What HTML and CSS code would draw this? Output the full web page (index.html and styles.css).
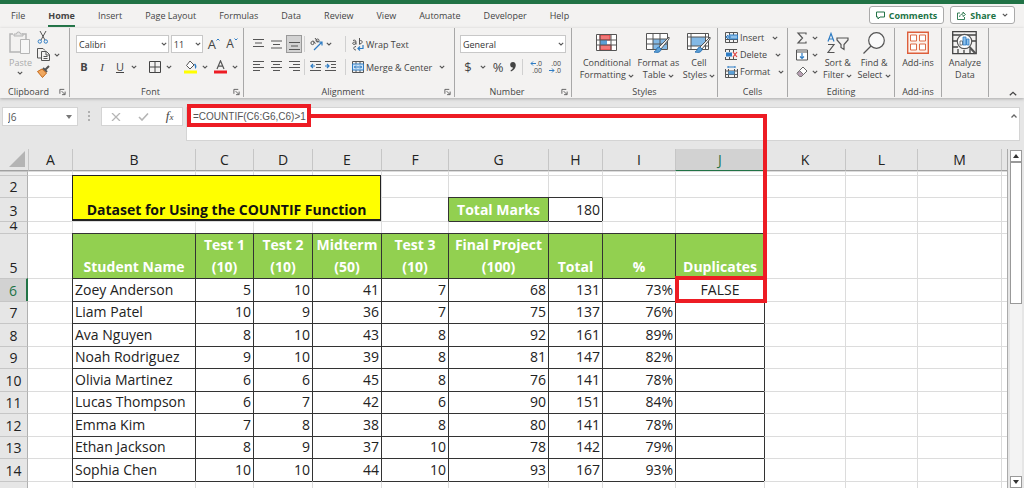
FILE: index.html
```html
<!DOCTYPE html>
<html lang="en">
<head>
<meta charset="utf-8">
<title>Spreadsheet</title>
<link rel="stylesheet" href="styles.css">
</head>
<body>
<svg class="defs" aria-hidden="true">
  <symbol id="chev" viewBox="0 0 6 4"><path d="M.8.8 3 3 5.200.8" fill="none" stroke="#555" stroke-width="1.1"/></symbol>
  <symbol id="launch" viewBox="0 0 8 8"><path d="M1 6V1h5M3 3l3.500 3.500M7 3.500V7H3.500" fill="none" stroke="#555"/></symbol>
  <symbol id="pen" viewBox="0 0 18 18"><path d="M17 1 7 11l2 2 8-10z" fill="#f3f2f1" stroke="#555"/><path d="M7 11c-3 0-2 4-5 5 4 1 7 0 7-3z" fill="#5b9fd6" stroke="#2f75b5"/></symbol>
</svg>
<div class="app">
  <div class="titlebar"></div>
  <header class="tabs">
    <nav class="tablist">
      <button>File</button><button class="current">Home</button><button>Insert</button><button>Page Layout</button><button>Formulas</button><button>Data</button><button>Review</button><button>View</button><button>Automate</button><button>Developer</button><button>Help</button>
    </nav>
    <div class="actions">
      <button class="pill"><svg width="9" height="9" viewBox="0 0 9 9"><path d="M.5 1h8v5H4L2 8V6H.500z" fill="none" stroke="#217346"/></svg>Comments</button>
      <button class="pill"><svg width="9" height="9" viewBox="0 0 9 9"><path d="M3 2H.5v6.500h7V6M2.500 6C3 3.500 4.500 3 6 3V1l2.500 2.500L6 5.500V4" fill="none" stroke="#217346" stroke-width=".9"/></svg>Share<svg class="chev share-chev"><use href="#chev"/></svg></button>
    </div>
  </header>

  <section class="ribbon">
    <div class="group clipboard">
      <div class="body">
        <button class="big paste"><svg width="22" height="24" viewBox="0 0 22 24"><path d="M4 3H1v18h10M13 3h4v5" fill="none" stroke="#b5b5b5" stroke-width="1.500"/><path d="M5 5V3h2.500a2 2 0 0 1 4 0H14v2z" fill="#e5e5e5" stroke="#b5b5b5"/><path d="M11.500 8.500h9v14h-9z" fill="#f7f7f7" stroke="#b5b5b5"/></svg><span>Paste</span><svg class="chev"><use href="#chev"/></svg></button>
        <div class="stack">
          <button aria-label="Cut"><svg width="12" height="13" viewBox="0 0 12 13"><path d="M3 0 8 9M9 0 4 9" stroke="#555"/><circle cx="2.800" cy="10.500" r="1.700" fill="none" stroke="#2e7cc4"/><circle cx="8.800" cy="10.500" r="1.700" fill="none" stroke="#2e7cc4"/></svg></button>
          <button aria-label="Copy" class="row"><svg width="13" height="13" viewBox="0 0 13 13"><path d="M4 10H.5V.5H6L8 2.500M4.500 3.500h5l3 3v6h-8zM9 3.500V7h3.500M6.500 8.500h4M6.500 10.500h4" fill="none" stroke="#555"/></svg><svg class="chev"><use href="#chev"/></svg></button>
          <button aria-label="Format painter"><svg width="13" height="13" viewBox="0 0 13 13"><path d="M12 1 8.500 4.500M6 3l4 4" stroke="#555" stroke-width="2"/><path d="M5 4 .500 6.500 5.500 12.500 9.500 8z" fill="#f0a860" stroke="#c56a1a"/></svg></button>
        </div>
      </div>
      <div class="label">Clipboard<svg class="launch"><use href="#launch"/></svg></div>
    </div>

    <div class="group font">
      <div class="body rows">
        <div class="tools">
          <label class="drop name"><select aria-label="Font"><option>Calibri</option></select><svg class="chev"><use href="#chev"/></svg></label>
          <label class="drop size"><select aria-label="Font size"><option>11</option></select><svg class="chev"><use href="#chev"/></svg></label>
          <button class="glyph grow" aria-label="Increase font size">A<svg width="4" height="3" viewBox="0 0 4 3"><path d="M.5 2.500 2 1l1.500 1.500" fill="none" stroke="#2e7cc4"/></svg></button>
          <button class="glyph shrink" aria-label="Decrease font size">A<svg width="4" height="3" viewBox="0 0 4 3"><path d="M.5.5 2 2 3.500.5" fill="none" stroke="#2e7cc4"/></svg></button>
        </div>
        <div class="tools font-tools">
          <button class="glyph"><b>B</b></button>
          <button class="glyph"><i class="serif">I</i></button>
          <button class="glyph"><u>U</u></button>
          <svg class="chev"><use href="#chev"/></svg>
          <span class="sep"></span>
          <button aria-label="Borders"><svg width="12" height="12" viewBox="0 0 12 12"><path d="M.5.5h11v11H.5zM6 0v12M0 6h12" fill="none" stroke="#444"/></svg></button>
          <svg class="chev"><use href="#chev"/></svg>
          <span class="sep"></span>
          <button aria-label="Fill color"><svg width="13" height="14" viewBox="0 0 13 14"><path d="M6 1 10 5 6 9 2.500 5.500z" fill="#fff" stroke="#555"/><path d="M10.500 4c2 2 1 4 .5 4" fill="none" stroke="#2e7cc4" stroke-width="1.500"/><path d="M0 10.500h13V13.500H0z" fill="#ff0"/></svg></button>
          <svg class="chev"><use href="#chev"/></svg>
          <button aria-label="Font color"><svg width="13" height="14" viewBox="0 0 13 14"><path d="M3 9 6.500.8 10 9M4.200 6.200h4.600" fill="none" stroke="#555" stroke-width="1.200"/><path d="M0 10.500h13V13.500H0z" fill="#ed1c24"/></svg></button>
          <svg class="chev"><use href="#chev"/></svg>
        </div>
      </div>
      <div class="label">Font<svg class="launch"><use href="#launch"/></svg></div>
    </div>

    <div class="group alignment">
      <div class="body rows">
        <div class="tools align-tools">
          <button aria-label="Top align"><svg width="11" height="11" viewBox="0 0 11 11"><path d="M0 .5h11M2 4h7M0 7.500h11" stroke="#555"/></svg></button>
          <button aria-label="Middle align"><svg width="11" height="11" viewBox="0 0 11 11"><path d="M0 2h11M2 5.500h7M0 9h11" stroke="#555"/></svg></button>
          <button class="pressed" aria-label="Bottom align"><svg width="11" height="11" viewBox="0 0 11 11"><path d="M0 3.500h11M2 7h7M0 10.500h11" stroke="#555"/></svg></button>
          <span class="sep"></span>
          <button class="row" aria-label="Orientation"><svg width="13" height="13" viewBox="0 0 13 13"><path d="M4 12 12 4M8.500 4H12v3.500" fill="none" stroke="#2e7cc4" stroke-width="1.200"/><circle cx="2.500" cy="5" r="1.600" fill="none" stroke="#555"/><path d="m3 2.500 2.500 3M5 0l3 4" stroke="#555"/><circle cx="7.500" cy="2.500" r="1.500" fill="none" stroke="#555"/></svg><svg class="chev"><use href="#chev"/></svg></button>
          <span class="sep"></span>
          <button class="row wide"><svg width="12" height="13" viewBox="0 0 12 13"><path d="M1 2.500c3-1 3 0 3 4M4 4C1 4 0 5 1 6s3 0 3-1M7.500 0v6.500M7.500 3c3-2 4 3 0 3M4 8.500C1 8.500 1 12 4 12" fill="none" stroke="#555"/><path d="M11 7v3.500H6M8 8.500l-2 2 2 2" fill="none" stroke="#2e7cc4" stroke-width="1.200"/></svg>Wrap Text</button>
        </div>
        <div class="tools align-tools">
          <button aria-label="Align left"><svg width="11" height="12" viewBox="0 0 11 12"><path d="M0 .5h11M0 3.500h7M0 6.500h11M0 9.500h7" stroke="#555"/></svg></button>
          <button aria-label="Center"><svg width="11" height="12" viewBox="0 0 11 12"><path d="M0 .5h11M2 3.500h7M0 6.500h11M2 9.500h7" stroke="#555"/></svg></button>
          <button aria-label="Align right"><svg width="11" height="12" viewBox="0 0 11 12"><path d="M0 .5h11M4 3.500h7M0 6.500h11M4 9.500h7" stroke="#555"/></svg></button>
          <span class="sep"></span>
          <button class="row indents" aria-label="Indent"><svg width="12" height="12" viewBox="0 0 12 12"><path d="M0 .5h11M6 3.500h5M6 6.500h5M0 9.500h11" stroke="#555"/><path d="M5 5H1M3 3 1 5l2 2" fill="none" stroke="#2e7cc4" stroke-width="1.200"/></svg><svg width="12" height="12" viewBox="0 0 12 12"><path d="M0 .5h11M6 3.500h5M6 6.500h5M0 9.500h11" stroke="#555"/><path d="M0 5h4M2 3l2 2-2 2" fill="none" stroke="#2e7cc4" stroke-width="1.200"/></svg></button>
          <span class="sep"></span>
          <button class="row wide"><svg width="12" height="12" viewBox="0 0 12 12"><path d="M.5.5h11v11H.5zM4 0v3M8 0v3M4 9v3M8 9v3" fill="none" stroke="#555"/><path d="M.5 3h11v6H.500z" fill="#cfe3f5" stroke="#2e7cc4"/><path d="M2 6h8M4 4.500 2.500 6 4 7.500M8 4.500 9.500 6 8 7.500" fill="none" stroke="#2e7cc4"/></svg>Merge &amp; Center<svg class="chev merge-chev"><use href="#chev"/></svg></button>
        </div>
      </div>
      <div class="label">Alignment<svg class="launch"><use href="#launch"/></svg></div>
    </div>

    <div class="group number">
      <div class="body rows">
        <div class="tools"><label class="drop format"><select aria-label="Number format"><option>General</option></select><svg class="chev"><use href="#chev"/></svg></label></div>
        <div class="tools number-tools">
          <button class="glyph large">$</button><svg class="chev"><use href="#chev"/></svg>
          <button class="glyph large">%</button>
          <button aria-label="Comma style"><svg width="6" height="10" viewBox="0 0 6 10"><path d="M3 0c4 0 4 7-2 9.500l-.5-1C2 7.500 3 6.500 3 5.500-.5 6-1 0 3 0z" fill="#444"/></svg></button>
          <span class="sep"></span>
          <button class="decimals" aria-label="Increase decimal"><span><svg width="6" height="5" viewBox="0 0 6 5"><path d="M6 2.500H1M3 .500l-2 2 2 2" fill="none" stroke="#2e7cc4"/></svg>.0</span><span>.00</span></button>
          <button class="decimals" aria-label="Decrease decimal"><span>.00</span><span><svg width="6" height="5" viewBox="0 0 6 5"><path d="M0 2.500h5M3 .500l2 2-2 2" fill="none" stroke="#2e7cc4"/></svg>.0</span></button>
        </div>
      </div>
      <div class="label">Number<svg class="launch"><use href="#launch"/></svg></div>
    </div>

    <div class="group styles">
      <div class="body even">
        <button class="big"><svg width="22" height="20" viewBox="0 0 22 20"><path d="M.5 1.500h20v16H.5z" fill="#fff"/><path d="M4 2h10v5H4zM4 12h11v5H4z" fill="#f17878" stroke="#e03c3c"/><path d="M4 7h7v5H4z" fill="#5b9fd6"/><path d="M.5 1.500h20v16H.5zM4 1v17M15 1v17M0 7h21M0 12h21" fill="none" stroke="#555"/></svg><span>Conditional<br>Formatting <svg class="chev"><use href="#chev"/></svg></span></button>
        <button class="big"><svg width="24" height="22" viewBox="0 0 24 22"><path d="M.5 1.500h21v16H.5z" fill="#fff"/><path d="M7 7h14v10H7z" fill="#83b9e6"/><path d="M.5 1.500h21v16H.5zM7 1v17M14 1v17M0 7h21M0 12h21" fill="none" stroke="#555"/><use href="#pen" x="6" y="4" width="18" height="18"/></svg><span>Format as<br>Table <svg class="chev"><use href="#chev"/></svg></span></button>
        <button class="big"><svg width="24" height="22" viewBox="0 0 24 22"><path d="M.5 1.500h21v16H.5z" fill="#fff" stroke="#555"/><path d="M4 5h15v9H4z" fill="#83b9e6"/><path d="M4 1v17M0 5h22M0 14h22M18.500 1v17" stroke="#555"/><use href="#pen" x="6" y="4" width="18" height="18"/></svg><span>Cell<br>Styles <svg class="chev"><use href="#chev"/></svg></span></button>
      </div>
      <div class="label">Styles</div>
    </div>

    <div class="group cells">
      <div class="body stack">
        <button class="row"><svg width="13" height="12" viewBox="0 0 13 12"><path d="M.5.500h12v10H.5zM4.500 0v11M8.500 0v11M0 7.500h13" fill="none" stroke="#555"/><path d="M4 3h8.500v4H4z" fill="#8fc1ea" stroke="#2e7cc4"/><path d="M6 5H1M3 3 1 5l2 2" fill="none" stroke="#2e7cc4"/></svg><span>Insert</span><svg class="chev"><use href="#chev"/></svg></button>
        <button class="row"><svg width="13" height="12" viewBox="0 0 13 12"><path d="M0 .500h12M.5 0v3M4.500 0v3M8.500 0v3M0 10.500h12M.5 8v3M4.500 8v3M8.500 8v3" fill="none" stroke="#555"/><path d="M1 3.500h6v4H1z" fill="#2e7cc4"/><path d="m8 3 4 5M12 3 8 8" stroke="#e03c3c" stroke-width="1.200"/></svg><span>Delete</span><svg class="chev"><use href="#chev"/></svg></button>
        <button class="row"><svg width="13" height="12" viewBox="0 0 13 12"><path d="M.5 3v8.500h12V3M3.500 3v9M9.500 3v9M0 8.500h13M0 5h13" fill="none" stroke="#555"/><path d="M3.500 5h6v3.500h-6z" fill="#5b9fd6"/><path d="M3 1h7M3 0v2M10 0v2" stroke="#2e7cc4"/></svg><span>Format</span><svg class="chev"><use href="#chev"/></svg></button>
      </div>
      <div class="label">Cells</div>
    </div>

    <div class="group editing">
      <div class="body">
        <div class="stack">
          <button class="row" aria-label="AutoSum"><svg width="12" height="12" viewBox="0 0 12 12"><path d="M10 2.500V1H2l4.500 5L2 11h8V9.500" fill="none" stroke="#555" stroke-width="1.200"/></svg><svg class="chev"><use href="#chev"/></svg></button>
          <button class="row" aria-label="Fill"><svg width="12" height="12" viewBox="0 0 12 12"><path d="M.5 1h11v10H.5zM0 3h12" fill="#fff" stroke="#555"/><path d="M6 4v5.500M4 7.500l2 2 2-2" fill="none" stroke="#2e7cc4" stroke-width="1.200"/></svg><svg class="chev"><use href="#chev"/></svg></button>
          <button class="row" aria-label="Clear"><svg width="12" height="12" viewBox="0 0 12 12"><path d="M7 1 11 5 5.500 10.500 1.500 6.500z" fill="#fff" stroke="#666"/><path d="M3.500 4.500l4 4-2 2h-2l-2.500-3z" fill="#b9a0b4" stroke="#777"/></svg><svg class="chev"><use href="#chev"/></svg></button>
        </div>
        <button class="big"><svg width="22" height="21" viewBox="0 0 22 21"><path d="M1 9 4 1l3 8M2 6.500h4" fill="none" stroke="#2e7cc4" stroke-width="1.200"/><path d="M1 12h6L1 20h6.500" fill="none" stroke="#555" stroke-width="1.200"/><path d="M10 5.500h11v2l-4 4.500v5l-3-2v-3l-4-4.500z" fill="none" stroke="#555" stroke-width="1.200"/></svg><span>Sort &amp;<br>Filter <svg class="chev"><use href="#chev"/></svg></span></button>
        <button class="big"><svg width="22" height="22" viewBox="0 0 22 22"><circle cx="13.500" cy="8.500" r="7.800" fill="#fafafa" stroke="#555" stroke-width="1.200"/><path d="M8 14 .5 21.500" stroke="#555" stroke-width="1.300"/></svg><span>Find &amp;<br>Select <svg class="chev"><use href="#chev"/></svg></span></button>
      </div>
      <div class="label">Editing</div>
    </div>

    <div class="group addins">
      <div class="body even"><button class="big"><svg width="22" height="23" viewBox="0 0 22 23"><path d="M.7.7h20.600v21H.7z" fill="#fdf3ec" stroke="#dd5f3c" stroke-width="1.400"/><path d="M3.500 3.500h6v6h-6zM12.500 3.500h6v6h-6zM3.500 12.500h6v6h-6zM12.500 12.500h6v6h-6z" fill="#fff" stroke="#dd6b46"/></svg><span>Add-ins</span></button></div>
      <div class="label">Add-ins</div>
    </div>

    <div class="group analyze">
      <div class="body even"><button class="big"><svg width="25" height="24" viewBox="0 0 25 24"><path d="M.7.7h23.500v22H.7zM0 4h24M0 10h5M19 10h5M0 16h6M6 18v5M12 19v4M18 18v5" fill="none" stroke="#444" stroke-width="1.300"/><circle cx="12.500" cy="10.500" r="7.200" fill="#fff" stroke="#555" stroke-width="1.200"/><path d="m17.500 16 6 6.500" stroke="#555" stroke-width="2.200"/><path d="M8 10h2.500v4H8z" fill="#fff" stroke="#555" stroke-width=".8"/><path d="M11 6h3v8h-3zM14.500 8H17v6h-2.500z" fill="#8fc1ea" stroke="#2e7cc4" stroke-width=".8"/></svg><span>Analyze<br>Data</span></button></div>
    </div>
    <button class="collapse" aria-label="Collapse ribbon"><svg width="8" height="5" viewBox="0 0 8 5"><path d="m.8 4.200 3.200-3 3.200 3" fill="none" stroke="#444" stroke-width="1.200"/></svg></button>
  </section>

  <section class="formula-bar">
    <label class="name-box"><input aria-label="Name box" value="J6"><svg width="6" height="4" viewBox="0 0 6 4"><path d="M0 0h6L3 4z" fill="#777"/></svg></label>
    <svg class="dots" width="2" height="10" viewBox="0 0 2 10"><path d="M0 0h2v2H0zM0 4h2v2H0zM0 8h2v2H0z" fill="#b0b0b0"/></svg>
    <div class="fx">
      <button aria-label="Cancel"><svg width="10" height="8" viewBox="0 0 10 8"><path d="m1 0 8 8M9 0 1 8" stroke="#b5b5b5" stroke-width="1.300"/></svg></button>
      <button aria-label="Enter"><svg width="11" height="8" viewBox="0 0 11 8"><path d="m1 4 3 3 6-6.500" fill="none" stroke="#b5b5b5" stroke-width="1.600"/></svg></button>
      <button class="serif" aria-label="Insert function"><i>f<small>x</small></i></button>
    </div>
    <div class="formula">
      <input aria-label="Formula bar" value="=COUNTIF(C6:G6,C6)&gt;1">
      <svg width="6" height="4" viewBox="0 0 6 4"><path d="M.5 3.500 3 1l2.500 2.500" fill="none" stroke="#666" stroke-width="1.300"/></svg>
    </div>
  </section>

  <main class="sheet">
    <table class="grid">
      <colgroup><col class="c-head"><col class="c-a"><col class="c-b"><col class="c-c"><col class="c-d"><col class="c-e"><col class="c-f"><col class="c-g"><col class="c-h"><col class="c-i"><col class="c-j"><col class="c-k"><col class="c-l"><col class="c-m"><col></colgroup>
      <thead><tr><th class="corner"><svg width="16" height="16" viewBox="0 0 16 16"><path d="M16 0v16H0z" fill="#b4b4b4"/></svg></th><th>A</th><th>B</th><th>C</th><th>D</th><th>E</th><th>F</th><th>G</th><th>H</th><th>I</th><th class="on">J</th><th>K</th><th>L</th><th>M</th><th></th></tr></thead>
      <tbody>
        <tr class="h4"><th></th><td></td><td></td><td></td><td></td><td></td><td></td><td></td><td></td><td></td><td></td><td></td><td></td><td></td><td></td></tr>
        <tr class="h22"><th>2</th><td></td><td class="title" colspan="4" rowspan="2">Dataset for Using the COUNTIF Function</td><td></td><td></td><td></td><td></td><td></td><td></td><td></td><td></td><td></td></tr>
        <tr class="h24"><th>3</th><td></td><td></td><td class="marks">Total Marks</td><td class="marks-value">180</td><td class="dark-left"></td><td></td><td></td><td></td><td></td><td></td></tr>
        <tr class="h12"><th><span>4</span></th><td></td><td></td><td></td><td></td><td></td><td></td><td class="dark-top"></td><td class="dark-top"></td><td></td><td></td><td></td><td></td><td></td><td></td></tr>
        <tr class="h45 boxed heads"><th>5</th><td></td><td>Student Name</td><td>Test 1<br>(10)</td><td>Test 2<br>(10)</td><td>Midterm<br>(50)</td><td>Test 3<br>(10)</td><td>Final Project<br>(100)</td><td>Total</td><td>%</td><td>Duplicates</td><td></td><td></td><td></td><td></td></tr>
        <tr class="h23 boxed"><th class="on">6</th><td></td><td>Zoey Anderson</td><td>5</td><td>10</td><td>41</td><td>7</td><td>68</td><td>131</td><td>73%</td><td class="result">FALSE</td><td></td><td></td><td></td><td></td></tr>
        <tr class="h22 boxed"><th>7</th><td></td><td>Liam Patel</td><td>10</td><td>9</td><td>36</td><td>7</td><td>75</td><td>137</td><td>76%</td><td></td><td></td><td></td><td></td><td></td></tr>
        <tr class="h23 boxed"><th>8</th><td></td><td>Ava Nguyen</td><td>8</td><td>10</td><td>43</td><td>8</td><td>92</td><td>161</td><td>89%</td><td></td><td></td><td></td><td></td><td></td></tr>
        <tr class="h22 boxed"><th>9</th><td></td><td>Noah Rodriguez</td><td>9</td><td>10</td><td>39</td><td>8</td><td>81</td><td>147</td><td>82%</td><td></td><td></td><td></td><td></td><td></td></tr>
        <tr class="h23 boxed"><th>10</th><td></td><td>Olivia Martinez</td><td>6</td><td>6</td><td>45</td><td>8</td><td>76</td><td>141</td><td>78%</td><td></td><td></td><td></td><td></td><td></td></tr>
        <tr class="h22 boxed"><th>11</th><td></td><td>Lucas Thompson</td><td>6</td><td>7</td><td>42</td><td>6</td><td>90</td><td>151</td><td>84%</td><td></td><td></td><td></td><td></td><td></td></tr>
        <tr class="h23 boxed"><th>12</th><td></td><td>Emma Kim</td><td>7</td><td>8</td><td>38</td><td>8</td><td>80</td><td>141</td><td>78%</td><td></td><td></td><td></td><td></td><td></td></tr>
        <tr class="h22 boxed"><th>13</th><td></td><td>Ethan Jackson</td><td>8</td><td>9</td><td>37</td><td>10</td><td>78</td><td>142</td><td>79%</td><td></td><td></td><td></td><td></td><td></td></tr>
        <tr class="h23 boxed"><th>14</th><td></td><td>Sophia Chen</td><td>10</td><td>10</td><td>44</td><td>10</td><td>93</td><td>167</td><td>93%</td><td></td><td></td><td></td><td></td><td></td></tr>
        <tr class="h22 after"><th>15</th><td></td><td></td><td></td><td></td><td></td><td></td><td></td><td></td><td></td><td></td><td></td><td></td><td></td><td></td></tr>
      </tbody>
    </table>
    <div class="scroll">
      <button aria-label="Scroll up"><svg width="6" height="4" viewBox="0 0 6 4"><path d="M0 4h6L3 0z" fill="#333"/></svg></button>
      <div class="thumb"></div>
      <div class="track"></div>
      <button aria-label="Scroll down"><svg width="6" height="4" viewBox="0 0 6 4"><path d="M0 0h6L3 4z" fill="#333"/></svg></button>
    </div>
  </main>
  <div class="mark formula-mark"></div>
  <div class="connector"></div>
  <div class="mark result-mark"></div>
</div>
</body>
</html>
```

FILE: styles.css
```css
* { box-sizing: border-box; }
body { margin: 0; background: #e6e6e6; color: #444; font-family: "Open Sans", "Noto Sans", sans-serif; font-size: 9px; }
button { border: 0; padding: 0; margin: 0; background: none; color: inherit; font: inherit; }
svg { display: block; flex: none; }
.defs { position: absolute; width: 0; height: 0; }
.app { position: relative; height: 100vh; display: flex; flex-direction: column; overflow: hidden; }
.serif { font-family: "Liberation Serif", serif; }
.chev { width: 6px; height: 4px; }

.titlebar { height: 4px; background: #217346; flex: none; }
.tabs { display: flex; justify-content: space-between; height: 24px; padding: 0 9px 0 11px; background: #f3f2f1; flex: none; }
.tablist { display: flex; gap: 23px; align-items: center; }
.tablist button { height: 21px; line-height: 19px; border-bottom: 2px solid transparent; white-space: nowrap; }
.tablist .current { font-weight: 700; border-color: #217346; }
.actions { display: flex; gap: 6px; padding: 2px 0 4px; }
.pill { display: flex; align-items: center; gap: 4px; padding: 0 6px; border: 1px solid #aaa; border-radius: 3px; background: #fff; color: #217346; font-weight: 700; font-size: 9px; }
.share-chev { margin-left: 2px; }

.ribbon { display: flex; height: 70px; background: #f3f2f1; flex: none; position: relative; box-shadow: 0 1px 3px #aaa; }
.group { position: relative; display: flex; flex-direction: column; justify-content: space-between; height: 69px; border-right: 1px solid #a8a8a8; flex: none; }
.body { display: flex; padding-top: 3px; }
.label { height: 10px; line-height: 10px; text-align: center; position: relative; }
.label:has(.launch) { padding-right: 12px; }
.launch { position: absolute; right: 3px; top: 1px; width: 7px; height: 8px; }
.row { display: flex; align-items: center; gap: 2px; white-space: nowrap; }
.stack { display: flex; flex-direction: column; gap: 4px; }
.stack button { height: 13px; }
.big { display: flex; flex-direction: column; align-items: center; gap: 2px; line-height: 12px; white-space: nowrap; }
.big > svg:first-child { height: 24px; }
.big span .chev { display: inline-block; vertical-align: middle; }
.even { justify-content: space-around; }

.clipboard { width: 70px; }
.clipboard .body { padding-left: 9px; gap: 5px; }
.clipboard .row { gap: 4px; }
.paste { color: #aaa; }
.font { width: 174px; }
.alignment { width: 211px; }
.number { width: 117px; }
.styles { width: 146px; }
.styles .body { padding-left: 6px; }
.cells { width: 70px; }
.cells .body { padding: 3px 0 0 7px; }
.cells .chev { margin-left: 6px; }
.editing { width: 107px; }
.editing .body { padding-left: 8px; gap: 5px; }
.editing .row { gap: 4px; }
.addins, .analyze { width: 47px; }

.rows { flex-direction: column; gap: 5px; padding: 7px 5px 0; }
.tools { display: flex; align-items: center; height: 18px; gap: 2px; }
.drop { position: relative; display: block; }
.drop select { appearance: none; width: 100%; height: 18px; border: 1px solid #c8c8c8; border-radius: 0; padding: 0 2px; background: #fff; color: #333; font: inherit; }
.drop .chev { position: absolute; right: 2px; top: 7px; }
.name { width: 93px; margin-left: 1px; }
.size { width: 32px; }
.format { width: 106px; }
.glyph { display: flex; justify-content: center; font-size: 11px; line-height: 14px; min-width: 12px; }
.glyph svg { margin-top: 1px; }
.grow { font-size: 13px; margin-left: 3px; }
.shrink { font-size: 12px; margin-left: 4px; }
.large { font-size: 13px; }
.font-tools { gap: 6px; padding-left: 3px; }
.font-tools .chev { margin-left: -1px; }
.sep { width: 1px; height: 16px; background: #d0d0d0; }
.align-tools { gap: 2px; padding-left: 1px; }
.align-tools > button:not(.row) { width: 16px; height: 18px; display: flex; justify-content: center; align-items: center; }
.align-tools .pressed { background: #d2d2d2; border: 1px solid #999; }
.align-tools > .row:not(.wide) { width: 36px; gap: 3px; padding-left: 3px; }
.align-tools .indents { gap: 6px; }
.align-tools .wide { padding-left: 4px; }
.merge-chev { margin-left: 5px; }
.number-tools { gap: 6px; padding-left: 2px; }
.decimals { display: flex; flex-direction: column; align-items: flex-end; width: 13px; font-size: 7px; line-height: 7px; }
.decimals span { display: flex; align-items: center; }
.collapse { position: absolute; right: 7px; bottom: 2px; }

.formula-bar { display: flex; align-items: flex-start; height: 51px; padding: 9px 4px 0 2px; flex: none; font-size: 10px; }
.name-box { display: flex; align-items: center; width: 76px; height: 19px; background: #fff; border: 1px solid #d4d4d4; padding: 0 5px; }
.name-box input, .formula input { border: 0; padding: 0; background: none; font: inherit; color: #555; min-width: 0; flex: 1; outline: 0; }
.dots { margin: 4px 11px 0 10px; }
.fx { display: flex; align-items: center; justify-content: space-around; width: 82px; height: 19px; background: #fff; border: 1px solid #d4d4d4; margin-right: 3px; }
.fx .serif { font-size: 13px; line-height: 14px; }
.fx small { font-size: 9px; }
.formula { display: flex; align-items: flex-start; flex: 1; height: 34px; background: #fff; border: 1px solid #d4d4d4; padding: 3px 2px 0 6px; font-family: "Liberation Sans", Arial, sans-serif; font-size: 10px; }
.formula svg { margin-top: 3px; }

.sheet { display: flex; flex: 1; min-height: 0; overflow: hidden; }
.grid { flex: 1; width: 0; align-self: flex-start; table-layout: fixed; border-spacing: 0; background: #fff; color: #222; font-size: 14px; line-height: 19px; border-right: 1px solid #aaa; }
.grid th { padding: 0 0 1px; font-weight: 400; background: #e6e6e6; border-top: 1px solid #c6c6c6; vertical-align: bottom; overflow: hidden; }
.grid tbody th { border-right: 1px solid #b0b0b0; }
.grid thead th { height: 22px; border-top: 0; border-left: 1px solid #c6c6c6; border-bottom: 1px solid #a0a0a0; }
.grid thead .corner { border-left: 0; }
.corner svg { margin: 0 0 2px 9px; }
.grid .on { background: #d2d2d2; color: #217346; }
.grid thead .on { border-bottom: 1px solid #217346; }
.grid tbody .on { border-right: 2px solid #217346; }
.grid td { padding: 0 2px 2px; border-left: 1px solid #dcdcdc; border-top: 1px solid #dcdcdc; vertical-align: bottom; text-align: right; white-space: nowrap; }
.grid td:nth-child(2) { border-left: 0; }
.grid .h4 td, .grid .h4 th { padding: 0; }
.c-head { width: 28px; } .c-a { width: 44px; } .c-b { width: 123px; } .c-c { width: 58px; } .c-d { width: 59px; }
.c-e { width: 69px; } .c-f { width: 67px; } .c-g { width: 100px; } .c-h { width: 54px; } .c-i { width: 73px; }
.c-j { width: 89px; } .c-k { width: 81px; } .c-l { width: 72px; } .c-m { width: 84px; }
.h4 { height: 4px; } .h12 { height: 12px; } .h22 { height: 22px; } .h23 { height: 23px; } .h24 { height: 24px; } .h45 { height: 45px; }
.h12 th span { display: block; height: 8px; margin-bottom: 2px; overflow: hidden; line-height: 8px; }
.grid .title { background: #ff0; border: 2px solid #222; border-width: 1px 1px 2px; padding-bottom: 0; font-weight: 700; text-align: center; color: #111; }
.grid .marks { background: #92d050; color: #fff; font-weight: 700; text-align: center; border-color: #333; }
.grid .marks-value { border-color: #333; }
.grid .dark-left { border-left-color: #333; }
.grid .dark-top { border-top-color: #333; }
.boxed td:nth-child(n+3):nth-child(-n+11), .after td:nth-child(n+3):nth-child(-n+11) { border-top-color: #333; }
.boxed td:nth-child(n+3):nth-child(-n+12) { border-left-color: #333; }
.boxed td:nth-child(3) { text-align: left; }
.grid .heads td:nth-child(n+3):nth-child(-n+11) { background: #92d050; color: #fff; font-weight: 700; text-align: center; line-height: 22px; padding: 0; }
.grid .result { text-align: center; }

.scroll { display: flex; flex-direction: column; width: 16px; padding: 1px 2px 0; background: #e6e6e6; }
.scroll button { width: 12px; height: 12px; display: flex; align-items: center; justify-content: center; background: #fff; border: 1px solid #999; flex: none; }
.thumb { width: 12px; flex: 9; background: #fff; border: 1px solid #999; }
.track { width: 12px; flex: 11; background: #f3f3f3; }

.mark { position: absolute; border: 4px solid #ed1c24; }
.formula-mark { left: 187px; top: 104px; width: 124px; height: 23px; }
.connector { position: absolute; left: 310px; top: 114px; width: 457px; height: 163px; border: 4px solid #ed1c24; border-width: 4px 4px 0 0; }
.result-mark { left: 675px; top: 276px; width: 92px; height: 27px; }
```
